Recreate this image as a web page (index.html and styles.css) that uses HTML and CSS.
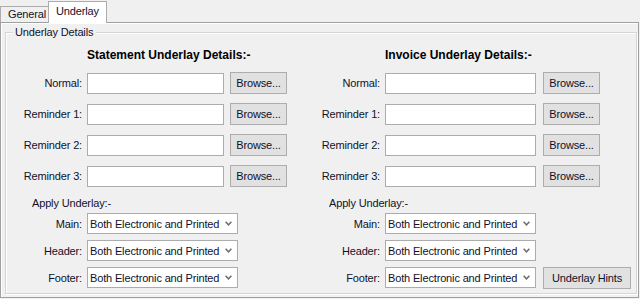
FILE: index.html
```html
<!DOCTYPE html>
<html lang="en">
<head>
    <meta charset="UTF-8">
    <meta name="viewport" content="width=device-width, initial-scale=1.0">
    <title>Underlay</title>
    <link rel="stylesheet" href="styles.css">
</head>
<body>
    <div class="tabs">
        <div class="tab">General</div>
        <div class="tab active">Underlay</div>
    </div>
    <div class="panel">
        <div class="group">
            <span class="group-title">Underlay Details</span>

            <!-- statement side -->
            <div class="col left">
                <div class="heading">Statement Underlay Details:-</div>
                <div class="row"><label>Normal:</label><input type="text" class="field"><button type="button" class="btn browse">Browse...</button></div>
                <div class="row"><label>Reminder 1:</label><input type="text" class="field"><button type="button" class="btn browse">Browse...</button></div>
                <div class="row"><label>Reminder 2:</label><input type="text" class="field"><button type="button" class="btn browse">Browse...</button></div>
                <div class="row"><label>Reminder 3:</label><input type="text" class="field"><button type="button" class="btn browse">Browse...</button></div>
                <div class="apply">Apply Underlay:-</div>
                <div class="row sel">
                    <label>Main:</label>
                    <div class="combo"><select><option>Both Electronic and Printed</option></select><svg width="7" height="5" viewBox="0 0 7 5"><polyline points="0.6,0.8 3.5,3.8 6.4,0.8" fill="none" stroke="#6e6e6e" stroke-width="1.5"/></svg></div>
                </div>
                <div class="row sel">
                    <label>Header:</label>
                    <div class="combo"><select><option>Both Electronic and Printed</option></select><svg width="7" height="5" viewBox="0 0 7 5"><polyline points="0.6,0.8 3.5,3.8 6.4,0.8" fill="none" stroke="#6e6e6e" stroke-width="1.5"/></svg></div>
                </div>
                <div class="row sel">
                    <label>Footer:</label>
                    <div class="combo"><select><option>Both Electronic and Printed</option></select><svg width="7" height="5" viewBox="0 0 7 5"><polyline points="0.6,0.8 3.5,3.8 6.4,0.8" fill="none" stroke="#6e6e6e" stroke-width="1.5"/></svg></div>
                </div>
            </div>

            <!-- invoice side -->
            <div class="col right">
                <div class="heading">Invoice Underlay Details:-</div>
                <div class="row"><label>Normal:</label><input type="text" class="field"><button type="button" class="btn browse">Browse...</button></div>
                <div class="row"><label>Reminder 1:</label><input type="text" class="field"><button type="button" class="btn browse">Browse...</button></div>
                <div class="row"><label>Reminder 2:</label><input type="text" class="field"><button type="button" class="btn browse">Browse...</button></div>
                <div class="row"><label>Reminder 3:</label><input type="text" class="field"><button type="button" class="btn browse">Browse...</button></div>
                <div class="apply">Apply Underlay:-</div>
                <div class="row sel">
                    <label>Main:</label>
                    <div class="combo"><select><option>Both Electronic and Printed</option></select><svg width="7" height="5" viewBox="0 0 7 5"><polyline points="0.6,0.8 3.5,3.8 6.4,0.8" fill="none" stroke="#6e6e6e" stroke-width="1.5"/></svg></div>
                </div>
                <div class="row sel">
                    <label>Header:</label>
                    <div class="combo"><select><option>Both Electronic and Printed</option></select><svg width="7" height="5" viewBox="0 0 7 5"><polyline points="0.6,0.8 3.5,3.8 6.4,0.8" fill="none" stroke="#6e6e6e" stroke-width="1.5"/></svg></div>
                </div>
                <div class="row sel">
                    <label>Footer:</label>
                    <div class="combo"><select><option>Both Electronic and Printed</option></select><svg width="7" height="5" viewBox="0 0 7 5"><polyline points="0.6,0.8 3.5,3.8 6.4,0.8" fill="none" stroke="#6e6e6e" stroke-width="1.5"/></svg></div>
                    <button type="button" class="btn hints">Underlay Hints</button>
                </div>
            </div>
        </div>
    </div>
</body>
</html>
```

FILE: styles.css
```css
body {
    margin: 0;
    width: 640px;
    height: 299px;
    overflow: hidden;
    background: #f0f0f0;
    font-family: "Liberation Sans", Arial, sans-serif;
    font-size: 11px;
    letter-spacing: -0.15px;
    color: #10102a;
}

/* tab strip */
.tabs {
    display: flex;
    align-items: flex-end;
    height: 22px;
}
.tab {
    box-sizing: border-box;
    height: 16px;
    width: 49px;
    padding-left: 7px;
    line-height: 14px;
    border: 1px solid #acacac;
    border-bottom: none;
    background: #f0f0f0;
}
.tab.active {
    position: relative;
    z-index: 1;
    height: 22px;
    width: 59px;
    margin-left: -1px;
    margin-bottom: -1px;
    padding-left: 0;
    text-align: center;
    line-height: 18px;
    background: #fff;
}

.panel {
    box-sizing: border-box;
    width: 639px;
    height: 276px;
    padding: 9px 0 0 4px;
    border: 1px solid #a0a0a0;
    box-shadow: inset 1px 1px 0 #fff;
}

.group {
    position: relative;
    box-sizing: border-box;
    display: flex;
    width: 632px;
    height: 262px;
    border: 1px solid #d5d5d5;
    box-shadow: 1px 1px 0 #fff, inset 1px 1px 0 #fff;
}
.group-title {
    position: absolute;
    top: -7px;
    left: 7px;
    padding: 0 3px 0 2px;
    line-height: 13px;
    background: #f0f0f0;
}

.col {
    display: flex;
    flex-direction: column;
    padding-top: 15px;
}
.col.left {
    width: 294px;
}
.col.left label {
    width: 76px;
}
.col.right label {
    width: 80px;
}

.heading {
    height: 14px;
    line-height: 14px;
    font-size: 12px;
    font-weight: bold;
    letter-spacing: 0;
    color: #000;
}
.left .heading { margin-left: 81px; }
.right .heading { margin-left: 85px; }

.row {
    display: flex;
    align-items: center;
    height: 22px;
    margin-top: 9px;
}
.heading + .row {
    margin-top: 10px;
}
.row label {
    flex: none;
    text-align: right;
}

.field {
    box-sizing: border-box;
    height: 21px;
    margin: 0 0 0 5px;
    padding: 0 2px;
    border: 1px solid #acacac;
    background: #fff;
    outline: none;
}
.left .field { width: 137px; }
.right .field { width: 151px; }

.btn {
    box-sizing: border-box;
    height: 22px;
    padding: 0;
    border: 1px solid #adadad;
    background: #e1e1e1;
    font: inherit;
    letter-spacing: inherit;
    color: #10102a;
}
.browse {
    width: 57px;
    margin-left: 6px;
}
.right .browse {
    margin-left: 7px;
}

.apply {
    height: 14px;
    line-height: 14px;
    margin-top: 9px;
}
.left .apply { margin-left: 26px; }
.right .apply { margin-left: 29px; }

.row.sel {
    height: 21px;
    margin-top: 6px;
}
.apply + .row.sel {
    margin-top: 3px;
}

.combo {
    box-sizing: border-box;
    display: flex;
    align-items: center;
    width: 151px;
    height: 21px;
    margin-left: 5px;
    border: 1px solid #acacac;
    background: #fff;
}
.combo select {
    flex: 1;
    min-width: 0;
    height: 19px;
    padding: 0 0 0 2px;
    border: none;
    background: transparent;
    -webkit-appearance: none;
    appearance: none;
    font: inherit;
    letter-spacing: inherit;
    color: #10102a;
    outline: none;
}
.combo svg {
    flex: none;
    margin-right: 5px;
}

.hints {
    width: 88px;
    margin-left: 7px;
}
```
